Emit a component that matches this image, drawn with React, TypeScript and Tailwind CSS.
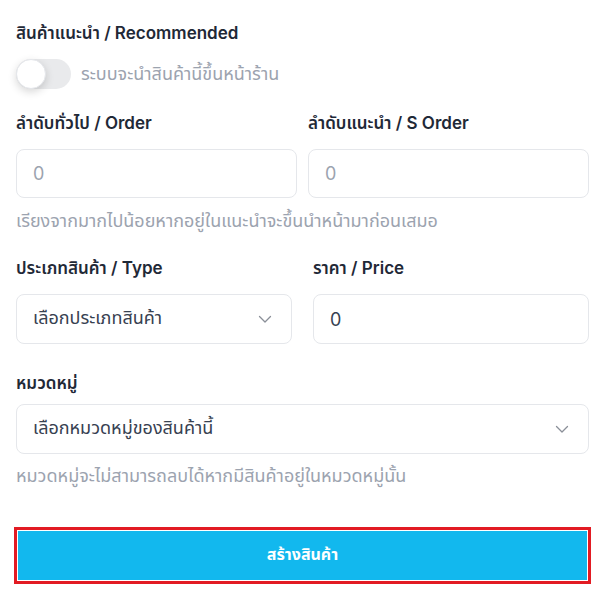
import React from "react";

const Chevron = () => (
  <svg width="16" height="16" viewBox="0 0 16 16" fill="none" stroke="#8a8f98" strokeWidth="1.3" strokeLinecap="round" strokeLinejoin="round">
    <path d="M2.5 5.5 8 11l5.5-5.5" />
  </svg>
);

export default function App() {
  return (
    <div
      className="w-[608px] h-[609px] bg-white pl-4 pr-[19px] pt-[21px] text-[#1f2937]"
      style={{ fontFamily: "Inter, 'Noto Sans', 'Noto Sans Thai', sans-serif" }}
    >
      <div className="text-[17px] font-semibold leading-6">สินค้าแนะนำ / Recommended</div>
      <div className="mt-[14px] flex items-center gap-[10px]">
        <div className="relative h-[30px] w-[55px] rounded-full bg-[#e9eaec]">
          <div className="absolute left-0 top-0 h-[30px] w-[30px] rounded-full bg-white shadow-[0_3px_8px_rgba(0,0,0,0.16)] border border-[#e5e7eb]" />
        </div>
        <div className="text-[18px] leading-6 text-[#9ca3af]">ระบบจะนำสินค้านี้ขึ้นหน้าร้าน</div>
      </div>

      <div className="mt-[22px] grid grid-cols-2 gap-x-[11px]">
        <div>
          <div className="text-[17px] font-semibold leading-6">ลำดับทั่วไป / Order</div>
          <div className="mt-[14px] flex h-[49px] items-center rounded-lg border border-[#e5e7eb] px-4 text-[18px] text-[#9ca3af]">0</div>
        </div>
        <div>
          <div className="text-[17px] font-semibold leading-6">ลำดับแนะนำ / S Order</div>
          <div className="mt-[14px] flex h-[49px] items-center rounded-lg border border-[#e5e7eb] px-4 text-[18px] text-[#9ca3af]">0</div>
        </div>
      </div>
      <div className="mt-[11px] text-[18px] leading-6 text-[#9ca3af]">เรียงจากมากไปน้อยหากอยู่ในแนะนำจะขึ้นนำหน้ามาก่อนเสมอ</div>

      <div className="mt-[23px] grid grid-cols-2 gap-x-[21px]">
        <div>
          <div className="text-[17px] font-semibold leading-6">ประเภทสินค้า / Type</div>
          <div className="mt-[14px] flex h-[50px] items-center justify-between rounded-lg border border-[#e5e7eb] pl-4 pr-[18px] text-[18px] text-[#374151]">
            <span className="pb-[3px]">เลือกประเภทสินค้า</span>
            <Chevron />
          </div>
        </div>
        <div>
          <div className="text-[17px] font-semibold leading-6">ราคา / Price</div>
          <div className="mt-[14px] flex h-[50px] items-center rounded-lg border border-[#e5e7eb] px-4 text-[18px] text-[#374151]">0</div>
        </div>
      </div>

      <div className="mt-[27px] text-[17px] font-semibold leading-6">หมวดหมู่</div>
      <div className="mt-[9px] flex h-[50px] items-center justify-between rounded-lg border border-[#e5e7eb] pl-4 pr-[18px] text-[18px] text-[#374151]">
        <span className="pb-[3px]">เลือกหมวดหมู่ของสินค้านี้</span>
        <Chevron />
      </div>
      <div className="mt-[10px] text-[18px] leading-6 text-[#9ca3af]">หมวดหมู่จะไม่สามารถลบได้หากมีสินค้าอยู่ในหมวดหมู่นั้น</div>

      <div className="mt-[39px] -mx-[2px] border-[3px] border-[#e21b23] p-[1px]">
        <div className="flex h-[49px] items-center justify-center bg-[#12b8ee] pb-[4px] text-[16px] font-bold text-white">
          สร้างสินค้า
        </div>
      </div>
    </div>
  );
}
